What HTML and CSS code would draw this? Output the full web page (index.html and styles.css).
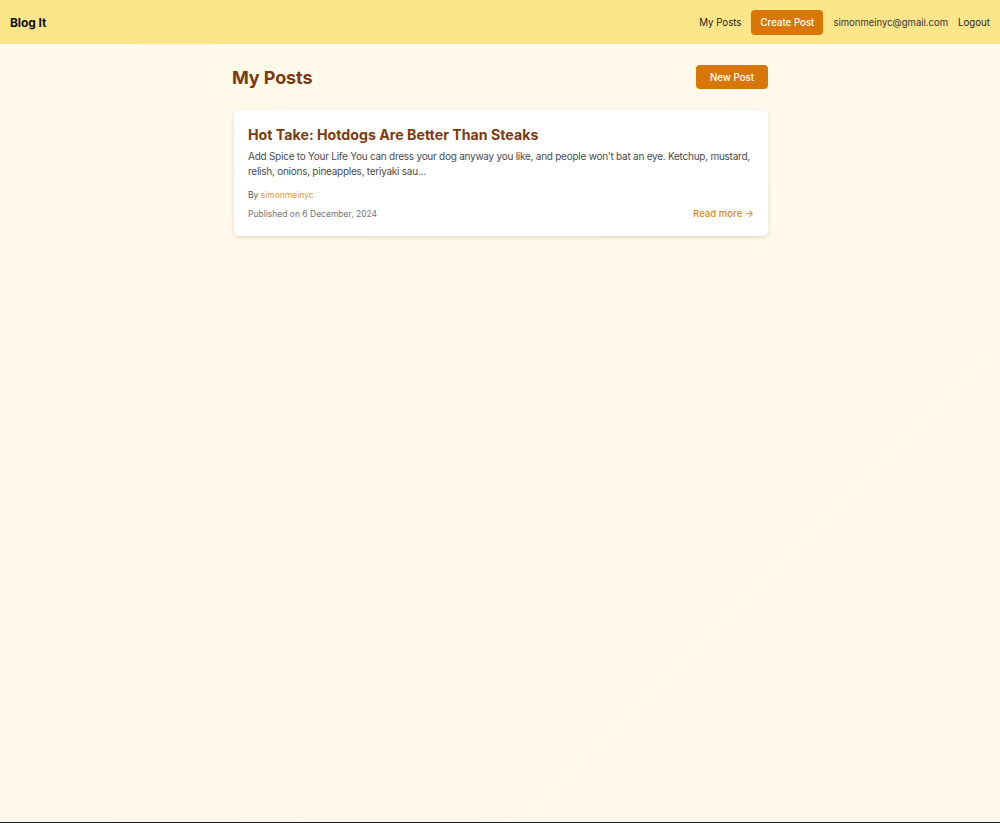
FILE: index.html
```html
<!DOCTYPE html>
<html lang="en">
<head>
<meta charset="utf-8">
<title>Blog It</title>
<link rel="stylesheet" href="styles.css">
</head>
<body>
<div class="page">
  <header class="topbar">
    <a class="brand" href="#">Blog It</a>
    <nav class="nav">
      <a class="nav-link" href="#">My Posts</a>
      <a class="btn btn-nav" href="#">Create Post</a>
      <span class="nav-email">simonmeinyc@gmail.com</span>
      <a class="nav-link" href="#">Logout</a>
    </nav>
  </header>
  <main class="main">
    <div class="head-row">
      <h1 class="page-title">My Posts</h1>
      <a class="btn btn-new" href="#">New Post</a>
    </div>
    <article class="card">
      <h2 class="card-title">Hot Take: Hotdogs Are Better Than Steaks</h2>
      <p class="card-excerpt">Add Spice to Your Life You can dress your dog anyway you like, and people won't bat an eye. Ketchup, mustard, relish, onions, pineapples, teriyaki sau...</p>
      <p class="card-author">By <span class="author-name">simonmeinyc</span></p>
      <div class="card-foot">
        <span class="card-date">Published on 6 December, 2024</span>
        <a class="read-more" href="#">Read more →</a>
      </div>
    </article>
  </main>
</div>
</body>
</html>
```

FILE: styles.css
```css
* { box-sizing: border-box; }
html, body { margin: 0; padding: 0; }
body {
  font-family: Inter, "Noto Sans", "Liberation Sans", sans-serif;
  background: #1a1a1a;
}
a { text-decoration: none; }
.page {
  min-height: 822px;
  background: linear-gradient(135deg, #fffaea 0%, #fff8ec 60%, #fff6ec 100%);
  display: flex;
  flex-direction: column;
}
.topbar {
  height: 44px;
  background: #fde68a;
  display: flex;
  align-items: center;
  justify-content: space-between;
  padding: 0 10px;
}
.brand {
  color: #111;
  font-weight: 700;
  font-size: 12px;
  letter-spacing: -0.1px;
}
.nav {
  display: flex;
  align-items: center;
  gap: 10px;
}
.nav-link, .nav-email {
  color: #1f1f1f;
  font-size: 9.7px;
}
.nav-email { color: #333; font-size: 9.5px; }
.btn {
  background: #d97706;
  color: #fff;
  font-weight: 500;
  border-radius: 4px;
  display: inline-flex;
  align-items: center;
  justify-content: center;
}
.btn-nav {
  height: 25px;
  width: 72px;
  font-size: 9.7px;
}
.main {
  width: 536px;
  margin: 0 auto;
  padding-top: 21px;
}
.head-row {
  display: flex;
  justify-content: space-between;
  align-items: center;
  height: 24px;
}
.page-title {
  margin: 0;
  font-size: 18px;
  font-weight: 700;
  color: #7c3a12;
  letter-spacing: -0.1px;
}
.btn-new {
  height: 24px;
  width: 72px;
  font-size: 9.7px;
}
.card {
  margin-top: 21px;
  margin-left: 2px;
  background: #fff;
  border-radius: 5px;
  box-shadow: 0 1px 3px rgba(120, 80, 20, 0.12), 0 2px 6px rgba(120, 80, 20, 0.08);
  padding: 15px 14px 17px 14px;
}
.card-title {
  margin: 0;
  font-size: 14.2px;
  font-weight: 700;
  color: #7c3a12;
  line-height: 20px;
}
.card-excerpt {
  margin: 4px 0 0;
  font-size: 10px;
  letter-spacing: -0.25px;
  line-height: 15px;
  color: #4b4b4b;
}
.card-author {
  margin: 10px 0 0;
  font-size: 8.5px;
  color: #555;
  line-height: 12px;
}
.author-name { color: #e09a3a; }
.card-foot {
  margin-top: 7px;
  display: flex;
  justify-content: space-between;
  align-items: center;
}
.card-date {
  font-size: 8.5px;
  color: #777;
}
.read-more {
  font-size: 9.6px;
  font-weight: 500;
  color: #d98a1a;
}
```
